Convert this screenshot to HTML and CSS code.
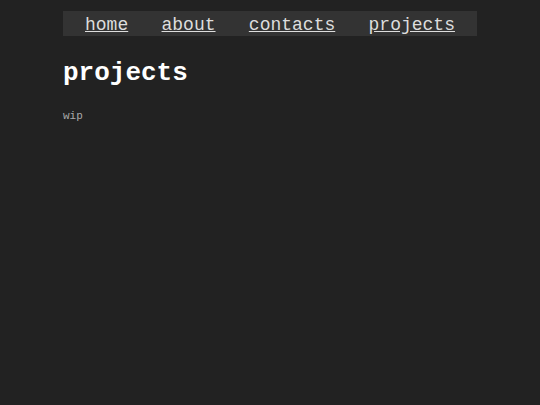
FILE: index.html
```html
<!DOCTYPE html>
<html>
<head>
<meta charset="utf-8">
<link rel="stylesheet" href="styles.css">
</head>
<body>
<div class="page">
  <nav class="nav">
    <a href="#">home</a>
    <a href="#">about</a>
    <a href="#">contacts</a>
    <a href="#">projects</a>
  </nav>
  <h1 class="title">projects</h1>
  <p class="text">wip</p>
</div>
</body>
</html>
```
FILE: styles.css
```css
html, body {
  margin: 0;
  padding: 0;
  background: #222222;
}
body {
  font-family: "Courier New", Courier, "Nimbus Mono PS", "Nimbus Mono L", FreeMono, "Liberation Mono", monospace;
  color: #eeeeee;
}
.page {
  width: 414px;
  margin: 0 auto;
  padding-top: 11px;
}
.nav {
  display: flex;
  justify-content: space-between;
  background: #333333;
  height: 25px;
  padding: 0 22px;
}
.nav a {
  color: #dddddd;
  font-size: 18px;
  line-height: 29px;
}
.title {
  font-size: 26px;
  font-weight: bold;
  margin: 22px 0 0 0;
  line-height: 30px;
  color: #ffffff;
}
.text {
  font-size: 11px;
  color: #aaaaaa;
  margin: 22px 0 0 0;
}
```
